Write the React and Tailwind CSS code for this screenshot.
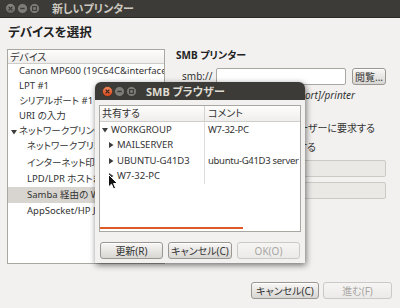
import React from "react";

const Btn = ({ children, disabled, className = "" }) => (
  <div
    className={`h-[17px] flex items-center justify-center rounded-[3px] border text-[10px] leading-none ${
      disabled
        ? "border-[#cbc9c5] text-[#a8a6a2] bg-[linear-gradient(#f6f5f4,#ebeae8)]"
        : "border-[#9a9792] text-[#333333] bg-[linear-gradient(#f8f7f6,#d8d6d2)] shadow-[inset_0_1px_0_#ffffff]"
    } ${className}`}
  >
    {children}
  </div>
);

const WinButtons = ({ active }) => (
  <div className="flex items-center gap-[1px]">
    <svg width="11" height="11" viewBox="0 0 11 11">
      <defs>
        <linearGradient id={active ? "ca" : "ci"} x1="0" y1="0" x2="0" y2="1">
          <stop offset="0" stopColor={active ? "#f58a5c" : "#8f8e88"} />
          <stop offset="1" stopColor={active ? "#d9451a" : "#64635e"} />
        </linearGradient>
      </defs>
      <circle cx="5.5" cy="5.5" r="5" fill={`url(#${active ? "ca" : "ci"})`} stroke="#2a2a27" strokeWidth="0.6" />
      <path d="M3.6 3.6 L7.4 7.4 M7.4 3.6 L3.6 7.4" stroke={active ? "#3a2a22" : "#3c3b37"} strokeWidth="1.3" />
    </svg>
    <svg width="11" height="11" viewBox="0 0 11 11">
      <circle cx="5.5" cy="5.5" r="5" fill="#7d7c77" stroke="#2a2a27" strokeWidth="0.6" />
      <path d="M3.3 5.5 H7.7" stroke="#3c3b37" strokeWidth="1.4" />
    </svg>
    <svg width="11" height="11" viewBox="0 0 11 11">
      <circle cx="5.5" cy="5.5" r="5" fill="#7d7c77" stroke="#2a2a27" strokeWidth="0.6" />
      <rect x="3.6" y="3.6" width="3.8" height="3.8" fill="none" stroke="#3c3b37" strokeWidth="1.1" />
    </svg>
  </div>
);

const Tri = ({ down }) => (
  <svg width="6" height="6" viewBox="0 0 6 6" className="shrink-0">
    {down ? <path d="M0 1 L6 1 L3 5.5 Z" fill="#3c3c3c" /> : <path d="M1 0 L5.5 3 L1 6 Z" fill="#3c3c3c" />}
  </svg>
);

export default function App() {
  const devices = [
    { t: "Canon MP600 (19C64C&interface=1)", x: "pl-[11px]" },
    { t: "LPT #1", x: "pl-[11px]" },
    { t: "シリアルポート #1", x: "pl-[11px]" },
    { t: "URI の入力", x: "pl-[11px]" },
    { t: "ネットワークプリンター", x: "pl-[3px]", tri: true },
    { t: "ネットワークプリンターの検索", x: "pl-[19px]" },
  ];
  const devices2 = [
    { t: "インターネット印刷プロトコル (ipp)" },
    { t: "LPD/LPR ホストまたはプリンター" },
    { t: "Samba 経由の Windows プリンター", sel: true },
    { t: "AppSocket/HP JetDirect" },
  ];
  const shares = [
    { t: "WORKGROUP", c: "W7-32-PC", down: true, lvl: 0 },
    { t: "MAILSERVER", c: "", lvl: 1 },
    { t: "UBUNTU-G41D3", c: "ubuntu-G41D3 server", lvl: 1 },
    { t: "W7-32-PC", c: "", lvl: 1 },
  ];

  return (
    <div className="relative w-[400px] h-[308px] overflow-hidden bg-[#f2f1f0] text-[#333333] font-['Noto_Sans','Noto_Sans_CJK_JP',sans-serif] [font-feature-settings:'palt'] text-[10px]">
      {/* main title bar */}
      <div className="h-[18px] bg-[#3c3b37] flex items-center pl-[5px] border-b border-[#2b2a27]">
        <WinButtons active={false} />
        <span className="ml-[12px] text-[11px] font-bold text-[#cdc9c0] leading-none">新しいプリンター</span>
      </div>

      <div className="px-[7px]">
        <div className="mt-[8px] h-[14px] flex items-center pl-[1px] text-[12.5px] font-bold text-[#222222] leading-none">
          デバイスを選択
        </div>

        <div className="flex mt-[9px]">
          {/* device list */}
          <div className="w-[158px] h-[215px] shrink-0 bg-white border border-[#a9a7a2] overflow-hidden text-[9.5px]">
            <div className="h-[14px] flex items-center pl-[2px] border-b border-[#cfcdc9] bg-[linear-gradient(#fdfdfc,#efeeec)] leading-none text-[10px]">
              デバイス
            </div>
            {devices.map((d, i) => (
              <div key={i} className={`h-[15px] flex items-center gap-[2px] whitespace-nowrap ${d.x}`}>
                {d.tri && <Tri down />}
                <span>{d.t}</span>
              </div>
            ))}
            <div className="h-[1px]" />
            {devices2.map((d, i) => (
              <div
                key={i}
                className={`h-[16px] flex items-center pl-[19px] whitespace-nowrap ${d.sel ? "bg-[#d8d5d0]" : ""}`}
              >
                {d.t}
              </div>
            ))}
          </div>

          {/* right panel */}
          <div className="ml-[11px] flex-1 pr-[7px] flex flex-col min-w-0">
            <div className="h-[12px] flex items-center font-bold text-[#222222] leading-none">SMB プリンター</div>
            <div className="mt-[7px] h-[17px] flex items-center pl-[6px]">
              <span className="w-[34px]">smb://</span>
              <div className="w-[130px] h-[17px] bg-white border border-[#a9a7a2] rounded-[2px]" />
              <Btn className="ml-[6px] w-[34px]">閲覧...</Btn>
            </div>
            <div className="mt-[4px] h-[12px] flex items-center justify-end mr-[31px] italic whitespace-nowrap">
              smb://[workgroup/]server[:port]/printer
            </div>
            <div className="mt-[21px] h-[12px] flex items-center justify-end mr-[11px] whitespace-nowrap">
              認証が必要な場合にユーザーに要求する
            </div>
            <div className="mt-[7px] h-[12px] flex items-center justify-end mr-[70px] whitespace-nowrap">
              今すぐ認証情報を設定する
            </div>
            <div className="mt-[7px] ml-[70px] h-[17px] bg-[#ebe9e6] border border-[#cdcac5] rounded-[2px]" />
            <div className="mt-[5px] ml-[70px] h-[17px] bg-[#ebe9e6] border border-[#cdcac5] rounded-[2px]" />
          </div>
        </div>

        <div className="mt-[18px] flex justify-end gap-[4px] pr-[1px]">
          <Btn className="w-[68px]">キャンセル(C)</Btn>
          <Btn disabled className="w-[69px]">進む(F)</Btn>
        </div>
      </div>

      {/* SMB browser dialog */}
      <div className="absolute left-[95px] top-[82px] w-[210px] h-[181px] flex flex-col rounded-t-[6px] shadow-[1px_2px_6px_rgba(0,0,0,0.55)]">
        <div className="h-[18px] bg-[#3c3b37] rounded-t-[6px] flex items-center pl-[7px] shrink-0">
          <WinButtons active />
          <span className="ml-[9px] text-[11px] font-bold text-[#dfdbd2] leading-none">SMB ブラウザー</span>
        </div>
        <div className="flex-1 bg-[#f2f1f0] px-[4px] pt-[5px] flex flex-col">
          <div className="h-[127px] bg-white border border-[#a9a7a2] flex flex-col overflow-hidden">
            <div className="h-[16px] flex border-b border-[#cfcdc9] bg-[linear-gradient(#fdfdfc,#efeeec)] shrink-0">
              <div className="w-[105px] shrink-0 pl-[2px] flex items-center border-r border-[#d4d2ce]">共有する</div>
              <div className="pl-[3px] flex items-center">コメント</div>
            </div>
            {shares.map((s, i) => (
              <div key={i} className="h-[15.5px] flex shrink-0 whitespace-nowrap text-[9.5px]">
                <div
                  className={`w-[105px] shrink-0 overflow-hidden flex items-center gap-[2px] border-r border-[#dedcd8] ${
                    s.lvl === 0 ? "pl-[2px]" : "pl-[8px]"
                  }`}
                >
                  <Tri down={s.down} />
                  <span className="ml-[1px]">{s.t}</span>
                </div>
                <div className="pl-[3px] flex items-center tracking-[-0.3px]">{s.c}</div>
              </div>
            ))}
            <div className="flex-1" />
            <div className="h-[2px] w-[143px] bg-[#dd5a26] shrink-0" />
            <div className="h-[2px] shrink-0" />
          </div>
          <div className="mt-[10px] pl-[1px] flex gap-[5px]">
            <Btn className="w-[63px]">更新(R)</Btn>
            <Btn className="w-[64px]">キャンセル(C)</Btn>
            <Btn disabled className="w-[63px]">OK(O)</Btn>
          </div>
        </div>
      </div>

      {/* mouse cursor */}
      <svg className="absolute left-[108px] top-[174px]" width="11" height="17" viewBox="0 0 11 17">
        <path d="M0.5 0.5 L0.5 13 L3.5 10.2 L5.6 15 L7.6 14.1 L5.6 9.5 L9.5 9.5 Z" fill="#111111" stroke="#ffffff" strokeWidth="1" />
      </svg>
    </div>
  );
}
